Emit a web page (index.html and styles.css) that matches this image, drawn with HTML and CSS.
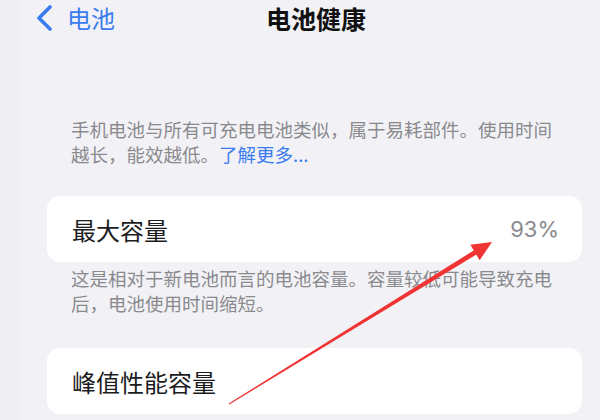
FILE: index.html
```html
<!DOCTYPE html>
<html lang="zh-CN">
<head>
    <meta charset="UTF-8">
    <meta name="viewport" content="width=device-width, initial-scale=1.0">
    <title>电池健康</title>
    <link rel="stylesheet" href="styles.css">
</head>
<body>
    <div class="page">
        <div class="edge"></div>

        <div class="main">
            <div class="nav">
                <a class="back" href="#">
                    <svg class="chevron" width="18" height="26" viewBox="0 0 18 26">
                        <path d="M15 2 L4 13 L15 24" fill="none" stroke="#3a7bf0" stroke-width="3.6" stroke-linecap="round" stroke-linejoin="round"/>
                    </svg>
                    <span>电池</span>
                </a>
                <h1>电池健康</h1>
                <div></div>
            </div>

            <p class="caption first">
                <span>手机电池与所有可充电电池类似，属于易耗部件。使用时间</span><br>
                <span>越长，能效越低。</span><a href="#">了解更多...</a>
            </p>

            <div class="card">
                <span class="label">最大容量</span>
                <span class="value">93%</span>
            </div>
            <p class="caption">
                <span>这是相对于新电池而言的电池容量。容量较低可能导致充电</span><br>
                <span>后，电池使用时间缩短。</span>
            </p>

            <div class="card second">
                <span class="label">峰值性能容量</span>
            </div>
        </div>

        <!-- 红色标注箭头 -->
        <svg class="arrow" width="600" height="420" viewBox="0 0 600 420">
            <polygon points="229.3,404.4 228.7,403.6 475.7,249.2 478.3,253.4" fill="#f03434"/>
            <polygon points="492,242 470.3,244.8 479.7,260.2" fill="#f03434"/>
        </svg>
    </div>
</body>
</html>
```

FILE: styles.css
```css
* {
    margin: 0;
    padding: 0;
    box-sizing: border-box;
}
body {
    background: #f2f2f7;
    font-family: "Noto Sans CJK SC", "Noto Sans", sans-serif;
    color: #1c1c1e;
}
.page {
    position: relative;
    width: 600px;
    height: 420px;
    overflow: hidden;
    display: grid;
    grid-template-columns: 20px 1fr;
}
.edge {
    background: #efeff1;
}
.main {
    background: #f2f2f6;
}
.nav {
    height: 36px;
    padding: 0 3px 0 15px;
    display: grid;
    grid-template-columns: 1fr auto 1fr;
    align-items: center;
}
.back {
    display: flex;
    align-items: center;
    gap: 14px;
    color: #3a7bf0;
    text-decoration: none;
    font-size: 24px;
    line-height: 1;
}
.nav h1 {
    font-size: 25px;
    font-weight: 700;
    line-height: 1;
    color: #111;
}
.caption {
    width: 540px;
    padding: 0 0 0 51px;
    font-size: 18.5px;
    line-height: 25px;
    color: #8a8a8e;
}
.caption.first {
    margin-top: 81px;
    margin-bottom: 29px;
}
.caption a {
    color: #3a7bf0;
    text-decoration: none;
}
.card {
    margin: 0 18px 4px 27px;
    height: 66px;
    background: #fff;
    border-radius: 13px;
    padding: 0 23px 0 25px;
    display: flex;
    align-items: center;
    justify-content: space-between;
}
.card.second {
    margin-top: 32px;
}
.label {
    font-size: 24px;
    color: #1c1c1e;
}
.value {
    font-family: Inter, "Noto Sans", sans-serif;
    font-size: 22px;
    color: #8a8a8e;
}
.arrow {
    position: absolute;
    top: 0;
    left: 0;
    pointer-events: none;
}
```
